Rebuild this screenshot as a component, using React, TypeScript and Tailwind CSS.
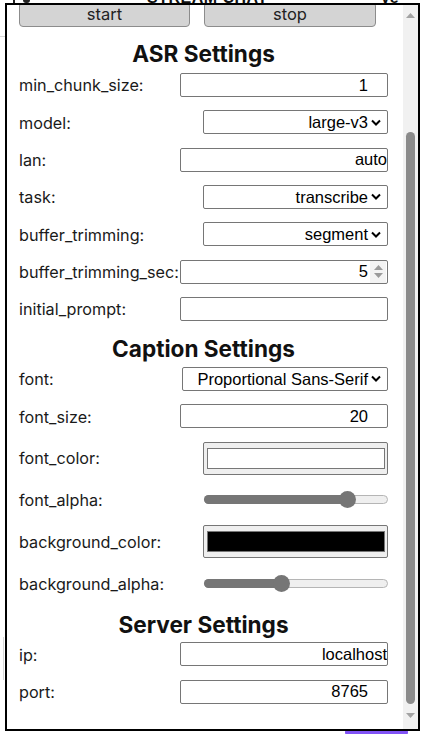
import React from "react";

const valueFont = "font-['Liberation_Sans',Arial,sans-serif] text-[16.5px] text-black";

function Chevron() {
  return (
    <svg width="10" height="7" viewBox="0 0 10 7" className="ml-[3px] shrink-0">
      <polyline points="1,1.5 5,5.5 9,1.5" fill="none" stroke="#000" strokeWidth="2" />
    </svg>
  );
}

function TextBox({ value, numeric = false }: { value: string; numeric?: boolean }) {
  return (
    <input
      readOnly
      type="text"
      defaultValue={value}
      className={`w-[208px] h-[24px] border border-[#767676] rounded-[2px] bg-white text-right outline-none ${
        numeric ? "pr-[19px]" : "pr-0"
      } ${valueFont}`}
    />
  );
}

function SpinBox({ value }: { value: string }) {
  return (
    <div className="w-[208px] h-[24px] border border-[#767676] rounded-[2px] bg-white flex items-center justify-end">
      <span className={`${valueFont} leading-none`}>{value}</span>
      <div className="ml-[2px] mr-[1px] w-[16px] h-[22px] bg-[#f3f3f3] flex flex-col items-center justify-center gap-[3px]">
        <svg width="9" height="5" viewBox="0 0 9 5">
          <polygon points="0,5 4.5,0 9,5" fill="#9a9a9a" />
        </svg>
        <svg width="9" height="5" viewBox="0 0 9 5">
          <polygon points="0,0 9,0 4.5,5" fill="#9a9a9a" />
        </svg>
      </div>
    </div>
  );
}

function SelectBox({ value, wide = false }: { value: string; wide?: boolean }) {
  return (
    <div
      className={`${wide ? "w-[206px]" : "w-[185px]"} h-[24px] border border-[#767676] rounded-[2px] bg-white flex items-center justify-end pr-[6px]`}
    >
      <span className={`${valueFont} leading-none whitespace-nowrap`}>{value}</span>
      <Chevron />
    </div>
  );
}

function ColorBox({ color }: { color: string }) {
  return (
    <div className="w-[185px] h-[33px] border border-[#767676] rounded-[2px] bg-[#efefef] pl-[3px] pr-[2px] py-[5px]">
      <div className="w-full h-full border border-[#777777]" style={{ backgroundColor: color }} />
    </div>
  );
}

function Range({ value }: { value: number }) {
  const w = 184;
  const t = 17;
  const c = t / 2 + value * (w - t);
  return (
    <div className="relative w-[184px] h-[17px] flex items-center">
      <div className="relative w-full h-[9px] rounded-full bg-[#efefef] border border-[#b5b5b5]">
        <div className="absolute left-[-1px] top-[-1px] h-[9px] rounded-l-full bg-[#767676]" style={{ width: c }} />
      </div>
      <div className="absolute top-0 w-[17px] h-[17px] rounded-full bg-[#767676]" style={{ left: c - t / 2 }} />
    </div>
  );
}

function Row({ label, children, tall = false }: { label: string; children: React.ReactNode; tall?: boolean }) {
  return (
    <div className={`flex items-center justify-between ${tall ? "h-[33px]" : "h-[24px]"}`}>
      <span className="text-[16.2px] text-[#1a1a1a] whitespace-nowrap pt-[1px]">{label}</span>
      {children}
    </div>
  );
}

function Heading({ children, className }: { children: React.ReactNode; className: string }) {
  return (
    <h2 className={`h-[28px] leading-[28px] text-[22.6px] font-bold text-center text-[#111] ${className}`}>
      {children}
    </h2>
  );
}

export default function App() {
  return (
    <div className="relative w-[422px] h-[734px] overflow-hidden bg-white font-['Inter',sans-serif]">
      {/* page behind the popup */}
      <div className="absolute left-[13px] top-0 w-[2px] h-[4px] bg-[#222]" />
      <div className="absolute left-[23px] top-0 w-[7px] h-[3px] rounded-b-[3px] bg-[#222]" />
      <div className="absolute left-[147px] top-[-10.5px] leading-[16px] text-[16px] font-bold tracking-[0.5px] text-[#111] font-['Liberation_Sans',Arial,sans-serif]">
        STREAM CHAT
      </div>
      <div className="absolute left-[380px] top-[-10.5px] leading-[16px] text-[16px] font-bold text-[#111] font-['Liberation_Sans',Arial,sans-serif]">
        Ve
      </div>
      <div className="absolute left-0 top-[36px] w-[5px] h-px bg-[#d8d8d8]" />
      <div className="absolute left-[3px] top-[637px] w-px h-[43px] bg-[#d8d8d8]" />
      <div className="absolute left-[345px] top-[726px] w-[63px] h-[12px] rounded-[6px] bg-[#8153f5]" />

      {/* popup panel */}
      <div className="absolute left-[5px] top-[3px] w-[415px] h-[728px] border-2 border-black bg-white flex overflow-hidden">
        <div className="flex-1 min-w-0 flex flex-col pl-[12px] pr-[15px]">
          <div className="mt-[-3px] flex gap-[14px]">
            <div className="w-[171px] h-[25px] rounded-[4px] border border-[#8c8c8c] bg-[#d4d4d4] flex items-center justify-center text-[16.5px] text-[#222]">
              start
            </div>
            <div className="w-[172px] h-[25px] rounded-[4px] border border-[#8c8c8c] bg-[#d4d4d4] flex items-center justify-center text-[16.5px] text-[#222]">
              stop
            </div>
          </div>

          <Heading className="mt-[13px]">ASR Settings</Heading>
          <div className="mt-[5px] flex flex-col gap-[13.33px]">
            <Row label="min_chunk_size:">
              <TextBox value="1" numeric />
            </Row>
            <Row label="model:">
              <SelectBox value="large-v3" />
            </Row>
            <Row label="lan:">
              <TextBox value="auto" />
            </Row>
            <Row label="task:">
              <SelectBox value="transcribe" />
            </Row>
            <Row label="buffer_trimming:">
              <SelectBox value="segment" />
            </Row>
            <Row label="buffer_trimming_sec:">
              <SpinBox value="5" />
            </Row>
            <Row label="initial_prompt:">
              <TextBox value="" />
            </Row>
          </div>

          <Heading className="mt-[14.5px]">Caption Settings</Heading>
          <div className="mt-[3.5px] flex flex-col gap-[13.33px]">
            <Row label="font:">
              <SelectBox value="Proportional Sans-Serif" wide />
            </Row>
            <Row label="font_size:">
              <TextBox value="20" numeric />
            </Row>
            <Row label="font_color:" tall>
              <ColorBox color="#ffffff" />
            </Row>
            <Row label="font_alpha:">
              <Range value={0.811} />
            </Row>
            <Row label="background_color:" tall>
              <ColorBox color="#000000" />
            </Row>
            <Row label="background_alpha:">
              <Range value={0.416} />
            </Row>
          </div>

          <Heading className="mt-[15.5px]">Server Settings</Heading>
          <div className="mt-[3.3px] flex flex-col gap-[13.33px]">
            <Row label="ip:">
              <TextBox value="localhost" />
            </Row>
            <Row label="port:">
              <TextBox value="8765" numeric />
            </Row>
          </div>
        </div>

        {/* scrollbar */}
        <div className="w-[15px] shrink-0 bg-[#f1f1f1] flex flex-col items-center pt-[8px]">
          <svg width="9" height="5" viewBox="0 0 9 5">
            <polygon points="0,5 4.5,0 9,5" fill="#a3a3a3" />
          </svg>
          <div className="mt-[114px] w-[9px] h-[572px] rounded-full bg-[#8b8b8b]" />
          <svg width="9" height="5" viewBox="0 0 9 5" className="mt-[9px]">
            <polygon points="0,0 9,0 4.5,5" fill="#a3a3a3" />
          </svg>
        </div>
      </div>
    </div>
  );
}
